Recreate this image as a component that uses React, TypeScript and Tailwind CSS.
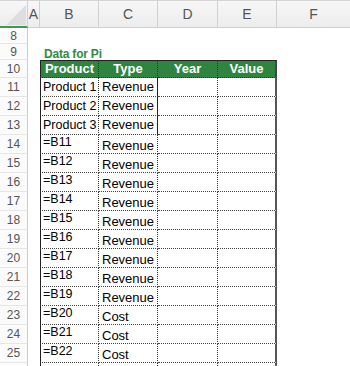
const font = { fontFamily: '"Liberation Sans", Arial, sans-serif' };

const rows: { n: number; b: string; c: string }[] = [
  { n: 11, b: "Product 1", c: "Revenue" },
  { n: 12, b: "Product 2", c: "Revenue" },
  { n: 13, b: "Product 3", c: "Revenue" },
  ...Array.from({ length: 9 }, (_, i) => ({ n: 14 + i, b: `=B${11 + i}`, c: "Revenue" })),
  ...Array.from({ length: 3 }, (_, i) => ({ n: 23 + i, b: `=B${20 + i}`, c: "Cost" })),
  { n: 26, b: "", c: "" },
];

function RowHead({ n, h }: { n: number; h: string }) {
  return (
    <div
      className={`${h} w-[28px] shrink-0 flex items-center justify-center border-r border-b border-r-[#cfcfcf] border-b-[#e6e6e6] bg-[#fbfbfb] text-[12px] text-[#555]`}
    >
      {n === 26 ? "" : n}
    </div>
  );
}

export default function App() {
  return (
    <div className="w-[350px] h-[366px] overflow-hidden bg-white text-black" style={font}>
      {/* column headers */}
      <div className="flex h-[28px] border-t border-[#d4d4d4] bg-gradient-to-b from-[#f7f7f7] to-[#ececec] text-[14px] text-[#555]">
        <div className="relative w-[28px] shrink-0 border-r border-b-2 border-r-[#d0d0d0] border-b-[#3d9a4f]">
          <svg className="absolute right-[1px] bottom-[1px]" width="22" height="22" viewBox="0 0 22 22">
            <polygon points="22,2 22,22 2,22" fill="#dedede" />
          </svg>
        </div>
        <div className="w-[12px] shrink-0 flex items-center justify-center border-r border-b border-[#d0d0d0]">A</div>
        <div className="w-[59px] shrink-0 flex items-center justify-center border-r border-b border-[#d0d0d0]">B</div>
        <div className="w-[59px] shrink-0 flex items-center justify-center border-r border-b border-[#d0d0d0]">C</div>
        <div className="w-[60px] shrink-0 flex items-center justify-center border-r border-b border-[#d0d0d0]">D</div>
        <div className="w-[59px] shrink-0 flex items-center justify-center border-r border-b border-[#d0d0d0]">E</div>
        <div className="flex-1 flex items-center justify-center border-b border-[#d0d0d0]">F</div>
      </div>

      {/* row 8 */}
      <div className="flex h-[16px]">
        <RowHead n={8} h="h-[16px]" />
      </div>

      {/* row 9 */}
      <div className="flex h-[16px]">
        <RowHead n={9} h="h-[16px]" />
        <div className="w-[12px] shrink-0" />
        <div className="w-[59px] shrink-0 whitespace-nowrap pl-[4px] pt-[1px] text-[12px] font-bold tracking-[-0.2px] text-[#2f8c40]">
          Data for Pi
        </div>
      </div>

      {/* row 10 header */}
      <div className="flex h-[18px]">
        <RowHead n={10} h="h-[18px]" />
        <div className="w-[12px] shrink-0" />
        <div className="w-[59px] shrink-0 flex items-center justify-center border-l border-t border-[#222] [border-right:1px_dotted_#333] [border-bottom:1px_dotted_#333] bg-[#2f8540] text-[13px] font-bold text-white">
          Product
        </div>
        <div className="w-[59px] shrink-0 flex items-center justify-center border-t border-[#222] [border-right:1px_dotted_#333] [border-bottom:1px_dotted_#333] bg-[#2f8540] text-[13px] font-bold text-white">
          Type
        </div>
        <div className="w-[60px] shrink-0 flex items-center justify-center border-t border-[#222] [border-right:1px_dotted_#333] [border-bottom:1px_dotted_#333] bg-[#2f8540] text-[13px] font-bold text-white">
          Year
        </div>
        <div className="w-[59px] shrink-0 flex items-center justify-center border-t border-[#222] [border-right:2px_solid_#444] [border-bottom:1px_dotted_#333] bg-[#2f8540] text-[13px] font-bold text-white">
          Value
        </div>
      </div>

      {rows.map((r) => {
        const product = r.n <= 13;
        return (
          <div key={r.n} className="flex h-[19px]">
            <RowHead n={r.n} h="h-[19px]" />
            <div className="w-[12px] shrink-0" />
            <div
              className={`w-[59px] shrink-0 flex border-l border-[#222] [border-right:1px_dotted_#333] [border-bottom:1px_dotted_#444] pl-[2px] text-[12.5px] whitespace-nowrap ${
                product ? "items-center" : "items-end pb-[1px]"
              }`}
            >
              {r.b}
            </div>
            <div
              className={`w-[59px] shrink-0 flex pl-[3px] text-[13px] whitespace-nowrap overflow-hidden [border-bottom:1px_dotted_#444] ${
                product ? "items-center [border-right:1px_solid_#222]" : "items-start pt-[1px] [border-right:1px_dotted_#333]"
              }`}
            >
              {r.c}
            </div>
            <div className="w-[60px] shrink-0 [border-right:1px_dotted_#333] [border-bottom:1px_dotted_#444]" />
            <div className="w-[59px] shrink-0 [border-right:2px_solid_#555] [border-bottom:1px_dotted_#444]" />
          </div>
        );
      })}
    </div>
  );
}
